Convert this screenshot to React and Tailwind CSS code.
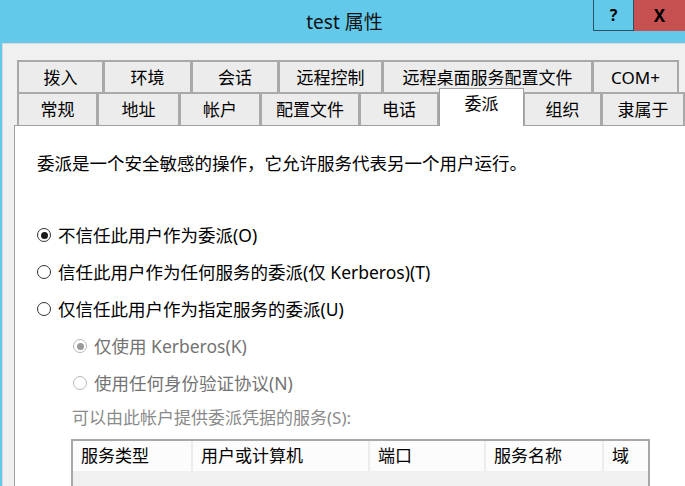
const FONT = { fontFamily: '"Segoe UI", "Noto Sans", "Noto Sans CJK SC", sans-serif' };

const row1 = [
  { label: "拨入", w: "w-[87px]" },
  { label: "环境", w: "w-[89px]" },
  { label: "会话", w: "w-[88px]" },
  { label: "远程控制", w: "w-[105px]" },
  { label: "远程桌面服务配置文件", w: "w-[211px]" },
  { label: "COM+", w: "w-[87px]" },
];

const row2 = [
  { label: "常规", w: "w-[81px]" },
  { label: "地址", w: "w-[83px]" },
  { label: "帐户", w: "w-[82px]" },
  { label: "配置文件", w: "w-[100px]" },
  { label: "电话", w: "w-[80px]" },
  { label: "委派", w: "w-[85px]", active: true },
  { label: "组织", w: "w-[79px]" },
  { label: "隶属于", w: "w-[84px]" },
];

function Tab({ label, w, active }) {
  if (active) {
    return (
      <div
        className={`${w} relative z-10 -mt-[4px] h-[38px] -mb-px shrink-0 bg-white border-x border-t border-[#a0a0a0] flex items-start justify-center pt-[3px] text-[17px] leading-[24px] text-black`}
      >
        {label}
      </div>
    );
  }
  return (
    <div
      className={`${w} h-[33px] shrink-0 -ml-px first:ml-0 bg-[#ececec] border-x-2 border-t-2 border-[#a9a9a9] flex items-center justify-center text-[17px] leading-[22px] text-black`}
    >
      {label}
    </div>
  );
}

function Radio({ checked, disabled }) {
  const ring = disabled ? "border-[#b8b8b8]" : "border-[#333333]";
  const dot = disabled ? "bg-[#9a9a9a]" : "bg-[#1a1a1a]";
  return (
    <span
      className={`w-[14px] h-[14px] rounded-full border ${ring} bg-white flex items-center justify-center shrink-0`}
    >
      {checked && <span className={`w-[7px] h-[7px] rounded-full ${dot}`} />}
    </span>
  );
}

function Option({ label, checked, disabled, className = "" }) {
  return (
    <div className={`flex items-center gap-[7px] h-[22px] ${className}`}>
      <Radio checked={checked} disabled={disabled} />
      <span className={`text-[17.5px] leading-[22px] ${disabled ? "text-[#737373]" : "text-black"}`}>
        {label}
      </span>
    </div>
  );
}

const columns = [
  { label: "服务类型", w: "w-[120px]" },
  { label: "用户或计算机", w: "w-[177px]" },
  { label: "端口", w: "w-[116px]" },
  { label: "服务名称", w: "w-[118px]" },
  { label: "域", w: "flex-1" },
];

export default function App() {
  return (
    <div className="w-[685px] h-[486px] overflow-hidden bg-[#63c9ea] flex flex-col" style={FONT}>
      {/* title bar */}
      <div className="relative h-[43px] shrink-0 flex items-center justify-center">
        <span className="text-[19px] leading-[24px] text-[#111] pl-[4px]">test 属性</span>
        <div className="absolute top-0 right-0 flex h-[31px]">
          <div className="w-[41px] h-full border-x border-b border-[#2e4f5b] flex items-center justify-center text-[16px] font-bold text-black">
            ?
          </div>
          <div className="w-[51px] h-full bg-[#c75050] flex items-center justify-center text-[17px] font-bold text-black">
            X
          </div>
        </div>
      </div>

      {/* dialog body */}
      <div className="ml-[2px] flex-1 bg-[#f0f0f0] border-t border-l border-[#dadada] flex flex-col pt-[16px] pl-[11px]">
        <div className="flex pl-[3px]">
          {row1.map((t) => (
            <Tab key={t.label} {...t} />
          ))}
        </div>
        <div className="flex items-start pl-[3px] -mt-px">
          {row2.map((t) => (
            <Tab key={t.label} {...t} />
          ))}
        </div>

        {/* panel */}
        <div className="flex-1 bg-white border-t border-l border-[#a0a0a0] pl-[22px] pt-[26px]">
          <p className="text-[17.5px] leading-[22px] text-black">
            委派是一个安全敏感的操作，它允许服务代表另一个用户运行。
          </p>

          <div className="mt-[50px] flex flex-col gap-[15px]">
            <Option label="不信任此用户作为委派(O)" checked />
            <Option label="信任此用户作为任何服务的委派(仅 Kerberos)(T)" />
            <Option label="仅信任此用户作为指定服务的委派(U)" />
            <Option label="仅使用 Kerberos(K)" checked disabled className="pl-[36px]" />
            <Option label="使用任何身份验证协议(N)" disabled className="pl-[36px]" />
          </div>

          <p className="mt-[13px] pl-[35px] text-[17px] leading-[22px] text-[#8a8a8a]">
            可以由此帐户提供委派凭据的服务(S):
          </p>

          <div className="ml-[34px] mt-[10px] w-[579px] h-[60px] border-2 border-[#a8a8a8] bg-[#f0f0f0]">
            <div className="flex h-[30px] bg-[#fcfcfc]">
              {columns.map((c) => (
                <div
                  key={c.label}
                  className={`${c.w} h-full border-r-2 border-[#ececec] last:border-r-0 pl-[8px] flex items-center text-[17px] leading-[22px] text-black`}
                >
                  {c.label}
                </div>
              ))}
            </div>
          </div>
        </div>
      </div>
    </div>
  );
}
